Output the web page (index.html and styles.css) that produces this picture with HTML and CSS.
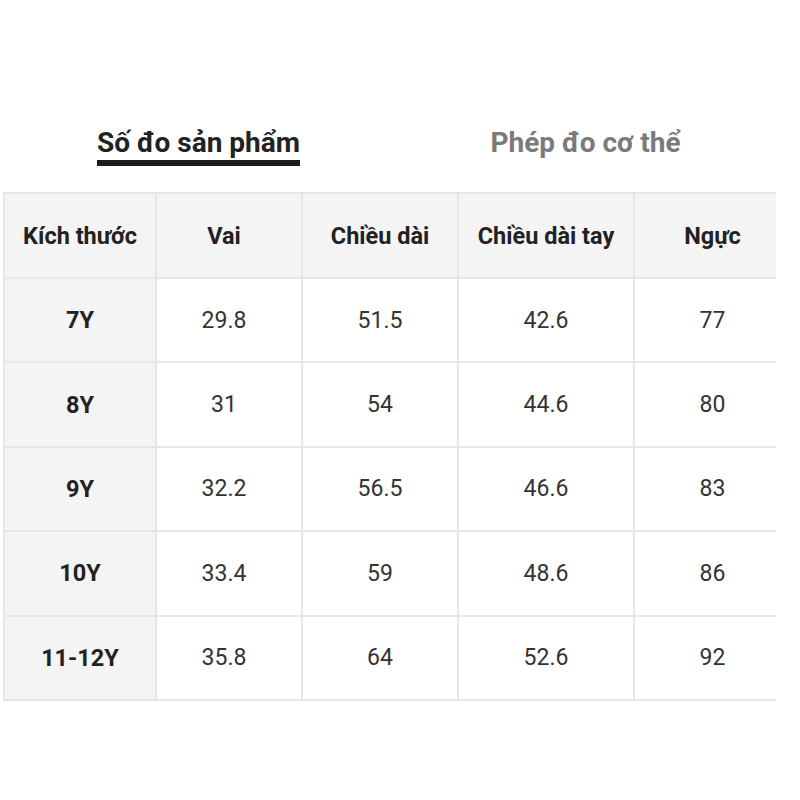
FILE: index.html
```html
<!DOCTYPE html>
<html lang="vi">
<head>
<meta charset="utf-8">
<link rel="stylesheet" href="styles.css">
</head>
<body>
<div class="page">
  <div class="tabs">
    <div class="tab"><span class="tab-label active">Số đo sản phẩm</span></div>
    <div class="tab"><span class="tab-label">Phép đo cơ thể</span></div>
  </div>
  <div class="table-wrap">
    <table class="size-table">
      <colgroup>
        <col class="c1"><col class="c2"><col class="c3"><col class="c4"><col class="c5">
      </colgroup>
      <thead>
        <tr><th>Kích thước</th><th>Vai</th><th>Chiều dài</th><th>Chiều dài tay</th><th>Ngực</th></tr>
      </thead>
      <tbody>
        <tr><th>7Y</th><td>29.8</td><td>51.5</td><td>42.6</td><td>77</td></tr>
        <tr><th>8Y</th><td>31</td><td>54</td><td>44.6</td><td>80</td></tr>
        <tr><th>9Y</th><td>32.2</td><td>56.5</td><td>46.6</td><td>83</td></tr>
        <tr><th>10Y</th><td>33.4</td><td>59</td><td>48.6</td><td>86</td></tr>
        <tr><th>11-12Y</th><td>35.8</td><td>64</td><td>52.6</td><td>92</td></tr>
      </tbody>
    </table>
  </div>
</div>
</body>
</html>
```

FILE: styles.css
```css
html, body {
  margin: 0;
  padding: 0;
  background: #ffffff;
}
body {
  font-family: Roboto, "Noto Sans", "Liberation Sans", sans-serif;
  color: #222222;
}
.page {
  padding-top: 126px;
  padding-left: 3px;
}
.tabs {
  display: flex;
  width: 774px;
  margin-left: 2px;
  height: 66px;
}
.tab {
  flex: 1;
  display: flex;
  justify-content: center;
  align-items: flex-start;
}
.tab-label {
  font-size: 28px;
  font-weight: 700;
  color: #7a7a7a;
  line-height: 34px;
}
.tab-label.active {
  color: #222222;
  border-bottom: 6px solid #1c1c1c;
}
.table-wrap {
  width: 773px;
  overflow: hidden;
}
.size-table {
  border-collapse: collapse;
  table-layout: fixed;
  width: 787px;
}
.c1 { width: 152px; }
.c2 { width: 146px; }
.c3 { width: 156px; }
.c4 { width: 176px; }
.c5 { width: 157px; }
.size-table th,
.size-table td {
  border: 2px solid #e6e6e6;
  text-align: center;
  vertical-align: middle;
  padding: 0;
  height: 82.4px;
  font-size: 23px;
}
.size-table tr > :nth-child(2) {
  padding-right: 10px;
}
.size-table thead th {
  height: 83px;
  background: #f4f4f4;
  font-weight: 700;
  font-size: 23.5px;
  color: #222222;
}
.size-table tbody th {
  background: #f4f4f4;
  font-weight: 700;
  font-size: 23.5px;
  color: #222222;
}
.size-table td {
  font-weight: 400;
  color: #333333;
  background: #ffffff;
}
```
